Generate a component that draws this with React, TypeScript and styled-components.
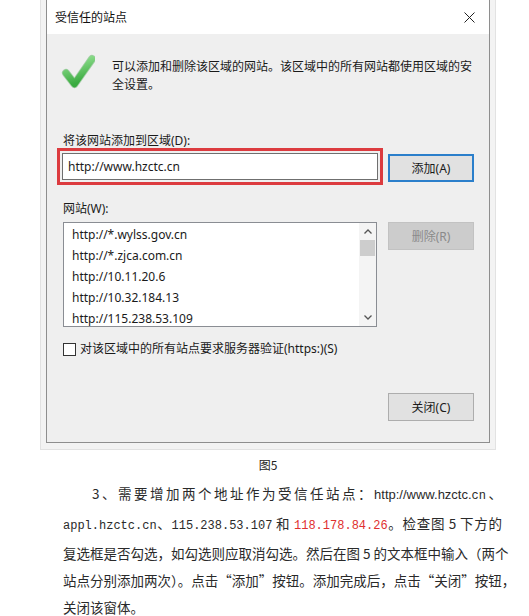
import styled, { createGlobalStyle } from "styled-components";

const GlobalStyle = createGlobalStyle`
  body {
    margin: 0;
    background: #fff;
  }
`

const uiFont = `"Noto Sans", "Noto Sans CJK SC", sans-serif`;

const Page = styled.div`
  width: 529px;
  height: 616px;
  overflow: hidden;
  background: #fff;
  font-family: ${uiFont};
`

const Frame = styled.div`
  margin-left: 40px;
  width: 456px;
  box-sizing: border-box;
  padding: 0 5px 6px 5px;
  background: #f3f3f3;
  border: 1px solid #e2e2e2;
  border-top: none;
`

const Dialog = styled.div`
  width: 444px;
  height: 443px;
  box-sizing: border-box;
  border: 1px solid #8e8e8e;
  border-top: none;
  background: #efefef;
  display: flex;
  flex-direction: column;
`

const TitleBar = styled.div`
  height: 35px;
  background: #fff;
  display: flex;
  align-items: center;
  justify-content: space-between;
  padding: 0 14px 0 8px;
  font-size: 12px;
  color: #111;
`

const Body = styled.div`
  flex: 1;
  display: flex;
  flex-direction: column;
  padding: 20px 15px 21px 16px;
  font-size: 12px;
  color: #1a1a1a;
`

const InfoRow = styled.div`
  display: flex;
  gap: 17px;
  margin-left: -4px;
`

const InfoText = styled.div`
  width: 362px;
  padding-top: 4px;
  line-height: 18px;
`

const Label = styled.div<{ $gap: number }>`
  margin-top: ${p => p.$gap}px;
  line-height: 14px;
`

const Row = styled.div<{ $gap: number }>`
  display: flex;
  align-items: flex-start;
  margin-top: ${p => p.$gap}px;
`

const Highlight = styled.div`
  margin-left: -6px;
  border: 3px solid #dc3b3f;
  padding: 2px;
`

const Input = styled.div`
  width: 316px;
  height: 27px;
  box-sizing: border-box;
  border: 1px solid #6f6f6f;
  background: #fff;
  padding-left: 5px;
  display: flex;
  align-items: center;
`

const Button = styled.div<{ $variant?: "default" | "disabled" }>`
  width: 86px;
  height: 28px;
  box-sizing: border-box;
  display: flex;
  align-items: center;
  justify-content: center;
  background: ${p => (p.$variant === "disabled" ? "#cccccc" : "#e1e1e1")};
  color: ${p => (p.$variant === "disabled" ? "#8a8a8a" : "#1a1a1a")};
  border: ${p => (p.$variant === "default" ? "2px solid #2b7fcb" : p.$variant === "disabled" ? "1px solid #c2c2c2" : "1px solid #adadad")};
`

const AddButton = styled(Button)`
  margin-left: 5px;
  margin-top: 6px;
`

const SideButton = styled(Button)`
  margin-left: 11px;
`

const ListBox = styled.div`
  width: 314px;
  height: 105px;
  box-sizing: border-box;
  border: 1px solid #8a8d93;
  background: #fff;
  display: flex;
  overflow: hidden;
`

const ListItems = styled.div`
  flex: 1;
  padding: 1px 0 0 8px;
`

const ListItem = styled.div`
  height: 21px;
  line-height: 21px;
  white-space: nowrap;
`

const ScrollBar = styled.div`
  width: 17px;
  background: #f4f4f4;
  display: flex;
  flex-direction: column;
  align-items: center;
`

const ScrollArrow = styled.div`
  height: 17px;
  width: 17px;
  display: flex;
  align-items: center;
  justify-content: center;
`

const ScrollThumb = styled.div`
  width: 15px;
  height: 16px;
  background: #cdcdcd;
`

const ScrollTrack = styled.div`
  flex: 1;
`

const CheckRow = styled.div`
  margin-top: 15px;
  display: flex;
  align-items: center;
  gap: 4px;
  line-height: 14px;
`

const CheckBox = styled.div`
  width: 13px;
  height: 13px;
  box-sizing: border-box;
  border: 1px solid #333;
  background: #fff;
`

const Footer = styled.div`
  margin-top: 37px;
  display: flex;
  justify-content: flex-end;
`

const Caption = styled.div`
  margin: 7px 0 0 46px;
  width: 444px;
  text-align: center;
  font-size: 12px;
  line-height: 16px;
  color: #222;
  font-family: "Noto Sans CJK SC", sans-serif;
`

const Paragraph = styled.div`
  margin: 7px 0 0 63px;
  width: 439px;
  font-family: "Noto Sans CJK SC", serif;
  font-size: 13.5px;
  line-height: 27px;
  color: #2a2a2a;
`

const Line = styled.div<{ $indent?: number; $last?: boolean }>`
  padding-left: ${p => p.$indent ?? 0}px;
  white-space: nowrap;
  text-align: ${p => (p.$last ? "left" : "justify")};
  text-align-last: ${p => (p.$last ? "left" : "justify")};
`

const Sans = styled.span`
  font-family: "Liberation Sans", sans-serif;
  font-size: 13px;
`

const Mono = styled.span<{ $red?: boolean }>`
  font-family: "Liberation Mono", monospace;
  font-size: 12px;
  color: ${p => (p.$red ? "#e0302f" : "inherit")};
`

const CloseIcon = () => (
  <svg width="11" height="11" viewBox="0 0 11 11">
    <path d="M0.5 0.5 L10.5 10.5 M10.5 0.5 L0.5 10.5" stroke="#222" strokeWidth="1" />
  </svg>
)

const CheckMark = () => (
  <svg width="36" height="36" viewBox="0 0 36 36">
    <defs>
      <linearGradient id="chk" x1="0" y1="0" x2="0.3" y2="1">
        <stop offset="0" stopColor="#98e396" />
        <stop offset="1" stopColor="#3aab40" />
      </linearGradient>
    </defs>
    <path d="M7 19 L15.5 30 L33 5" fill="none" stroke="#2f9a36" strokeWidth="8" strokeLinecap="round" strokeLinejoin="round" opacity="0.4" />
    <path d="M7 19 L15.5 30 L33 5" fill="none" stroke="url(#chk)" strokeWidth="6.5" strokeLinecap="round" strokeLinejoin="round" />
  </svg>
)

const Chevron = ({ up }: { up?: boolean }) => (
  <svg width="8" height="5" viewBox="0 0 8 5">
    <path d={up ? "M0.5 4.5 L4 1 L7.5 4.5" : "M0.5 0.5 L4 4 L7.5 0.5"} fill="none" stroke="#555" strokeWidth="1.3" />
  </svg>
)

const sites = [
  "http://*.wylss.gov.cn",
  "http://*.zjca.com.cn",
  "http://10.11.20.6",
  "http://10.32.184.13",
  "http://115.238.53.109",
];

export default function App() {
  return (
    <Page>
      <GlobalStyle />
      <Frame>
        <Dialog>
          <TitleBar>
            <span>受信任的站点</span>
            <CloseIcon />
          </TitleBar>
          <Body>
            <InfoRow>
              <CheckMark />
              <InfoText>可以添加和删除该区域的网站。该区域中的所有网站都使用区域的安全设置。</InfoText>
            </InfoRow>
            <Label $gap={40}>将该网站添加到区域(D):</Label>
            <Row $gap={0}>
              <Highlight>
                <Input>http://www.hzctc.cn</Input>
              </Highlight>
              <AddButton $variant="default">添加(A)</AddButton>
            </Row>
            <Label $gap={17}>网站(W):</Label>
            <Row $gap={6}>
              <ListBox>
                <ListItems>
                  {sites.map(s => <ListItem key={s}>{s}</ListItem>)}
                </ListItems>
                <ScrollBar>
                  <ScrollArrow><Chevron up /></ScrollArrow>
                  <ScrollThumb />
                  <ScrollTrack />
                  <ScrollArrow><Chevron /></ScrollArrow>
                </ScrollBar>
              </ListBox>
              <SideButton $variant="disabled">删除(R)</SideButton>
            </Row>
            <CheckRow>
              <CheckBox />
              <span>对该区域中的所有站点要求服务器验证(https:)(S)</span>
            </CheckRow>
            <Footer>
              <Button>关闭(C)</Button>
            </Footer>
          </Body>
        </Dialog>
      </Frame>
      <Caption>图5</Caption>
      <Paragraph>
        <Line $indent={29}>3、需要增加两个地址作为受信任站点：<Sans>http://www.hzctc.</Sans><Mono>cn</Mono>、</Line>
        <Line><Mono>appl.hzctc.cn</Mono>、<Mono>115.238.53.107</Mono> 和 <Mono $red>118.178.84.26</Mono>。检查图 5 下方的</Line>
        <Line>复选框是否勾选，如勾选则应取消勾选。然后在图 5 的文本框中输入（两个</Line>
        <Line>站点分别添加两次）。点击“添加”按钮。添加完成后，点击“关闭”按钮，</Line>
        <Line $last>关闭该窗体。</Line>
      </Paragraph>
    </Page>
  );
}
